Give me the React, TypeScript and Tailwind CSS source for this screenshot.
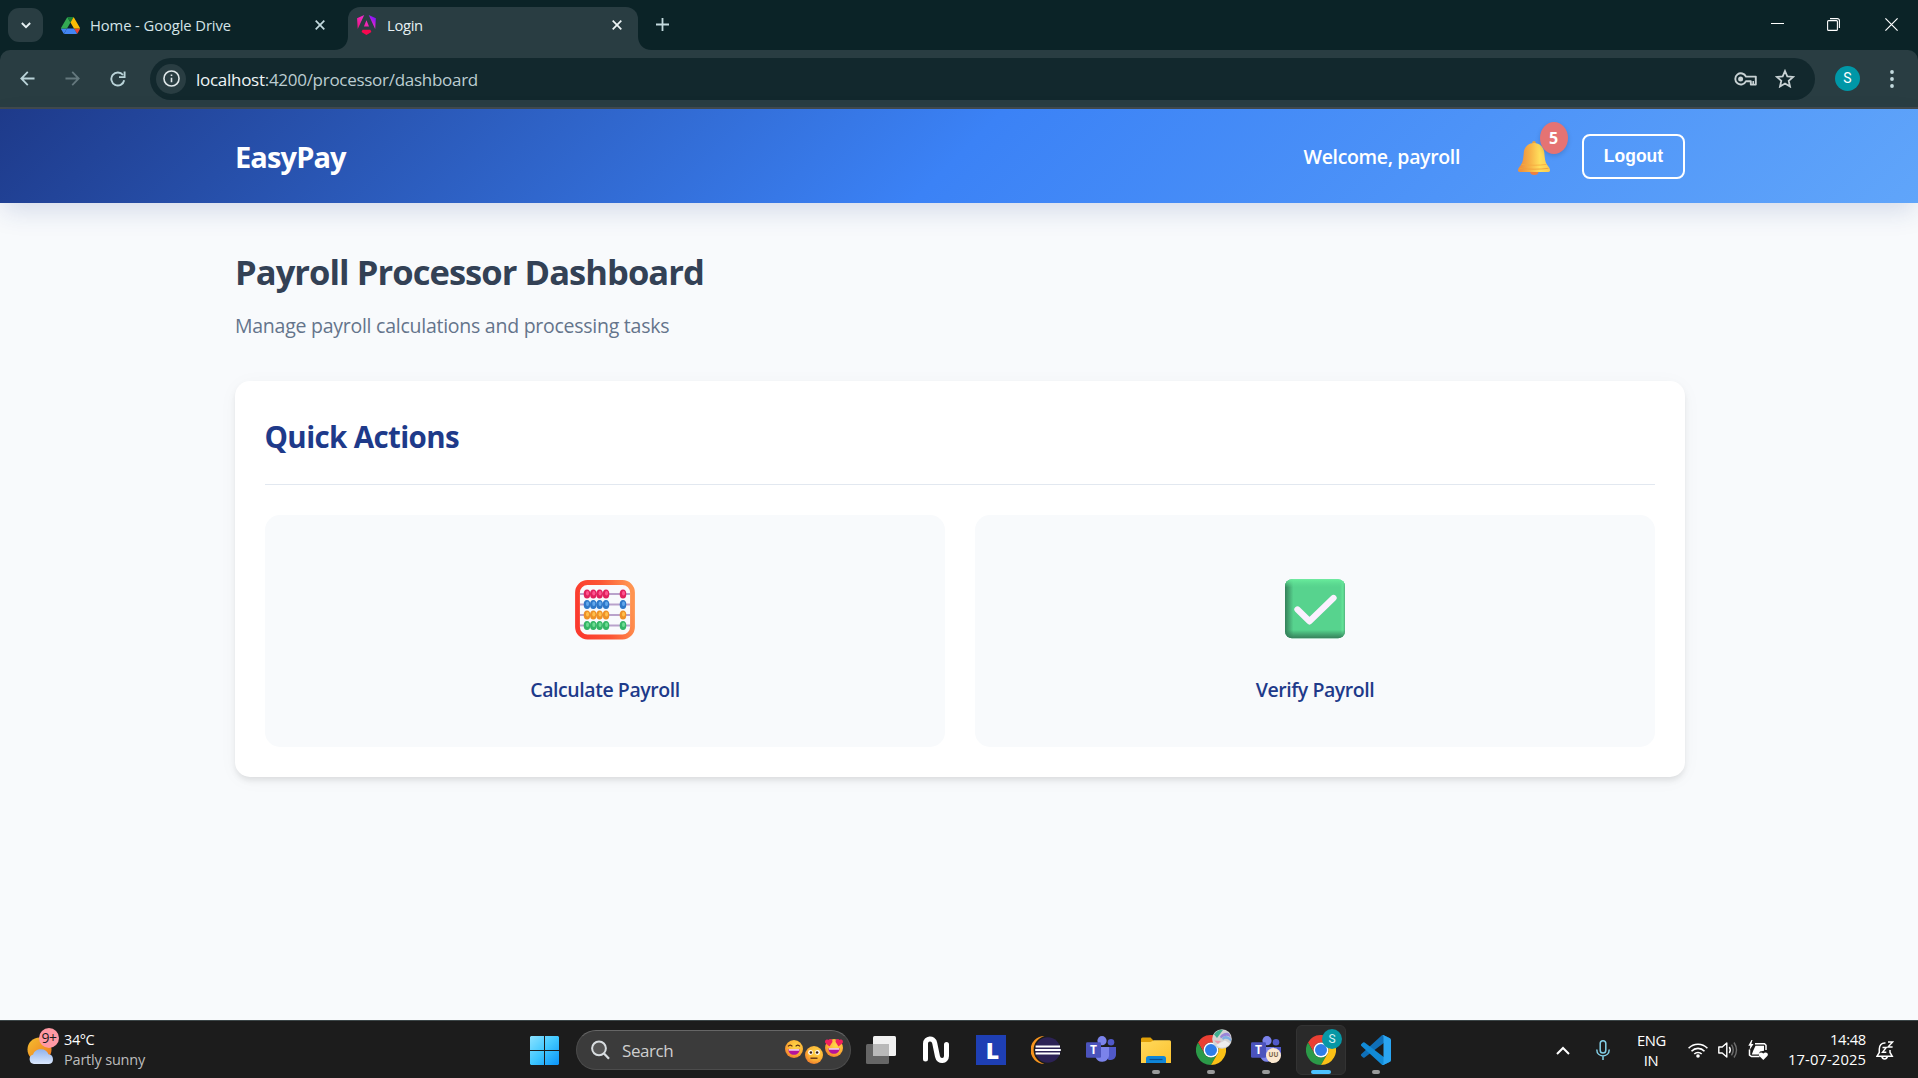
import type { ReactNode } from "react";

function DriveIcon() {
  return (
    <svg viewBox="0 0 87.3 78" preserveAspectRatio="none" className="h-[17px] w-[19px]">
      <path fill="#4285f4" d="m6.6 66.85 3.85 6.65c.8 1.4 1.95 2.5 3.3 3.3l13.75-23.8h-27.5c0 1.55.4 3.1 1.2 4.5z" />
      <path fill="#34a853" d="m43.65 25-13.75-23.8c-1.35.8-2.5 1.9-3.3 3.3l-25.4 44a9.06 9.06 0 0 0 -1.2 4.5h27.5z" />
      <path fill="#ea4335" d="m73.55 76.8c1.35-.8 2.5-1.9 3.3-3.3l1.6-2.75 7.65-13.25c.8-1.4 1.2-2.95 1.2-4.5h-27.502l5.852 11.5z" />
      <path fill="#188038" d="m43.65 25 13.75-23.8c-1.35-.8-2.9-1.2-4.5-1.2h-18.5c-1.6 0-3.15.45-4.5 1.2z" />
      <path fill="#4285f4" d="m59.8 53h-32.3l-13.75 23.8c1.35.8 2.9 1.2 4.5 1.2h50.8c1.6 0 3.15-.45 4.5-1.2z" />
      <path fill="#fbbc04" d="m73.4 26.5-12.7-22c-.8-1.4-1.95-2.5-3.3-3.3l-13.75 23.8 16.15 28h27.45c0-1.55-.4-3.1-1.2-4.5z" />
    </svg>
  );
}

function AngularIcon() {
  return (
    <svg viewBox="0 0 223 236" className="h-5 w-[19px]">
      <defs>
        <linearGradient id="ngA" x1="0.1" y1="0.8" x2="1" y2="0.1">
          <stop offset="0" stopColor="#f0188c" />
          <stop offset="0.5" stopColor="#f22bc6" />
          <stop offset="0.8" stopColor="#9a18f0" />
          <stop offset="1" stopColor="#6a1bff" />
        </linearGradient>
      </defs>
      <path fill="url(#ngA)" d="m222.077 39.192-8.019 125.923L137.387 0l84.69 39.192ZM111.039 62.675l30.357 73.803H80.681l30.358-73.803ZM7.937 165.115 0 39.192 84.69 0 7.937 165.115Z" />
      <path fill="#f8084f" d="m168.972 202.017-57.933 33.056-57.934-33.056 11.783-28.556h92.301z" />
    </svg>
  );
}

function CloseX({ color }: { color: string }) {
  return (
    <svg viewBox="0 0 10 10" className="h-[10px] w-[10px]" stroke={color} strokeWidth="1.7">
      <path d="M.7.7l8.6 8.6M9.3.7L.7 9.3" />
    </svg>
  );
}

function TabStrip() {
  return (
    <div className="flex h-[50px] items-start bg-[#0b2327] text-[#d5e5e8]">
      <div className="mt-2 ml-2 flex h-[34px] w-[35px] items-center justify-center rounded-[11px] bg-[#293d42]">
        <svg viewBox="0 0 12 8" className="h-[7px] w-[10px]" fill="none" stroke="#e6f0f2" strokeWidth="2.3">
          <path d="M1 1l5 5 5-5" />
        </svg>
      </div>
      <div className="mt-[7px] ml-[18px] flex h-9 w-[271px] items-center">
        <DriveIcon />
        <span className="ml-[10px] flex-1 text-[14.75px] tracking-[-0.08px] whitespace-nowrap">Home - Google Drive</span>
        <span className="mr-[7px]"><CloseX color="#c3dade" /></span>
      </div>
      <svg viewBox="0 0 14 14" className="mt-9 ml-[2px] h-[14px] w-[14px]" fill="#293d42">
        <path d="M14 0v14H0C9 14 14 8 14 0z" />
      </svg>
      <div className="mt-[7px] flex h-[43px] w-[290px] items-start rounded-t-[12px] bg-[#293d42] pt-2">
        <span className="ml-[9px]"><AngularIcon /></span>
        <span className="ml-[11px] flex-1 text-[14.75px] leading-5 tracking-[-0.3px] text-[#e6f0f2]">Login</span>
        <span className="mt-[5px] mr-[16px]"><CloseX color="#eef5f6" /></span>
      </div>
      <svg viewBox="0 0 14 14" className="mt-9 h-[14px] w-[14px]" fill="#293d42">
        <path d="M0 0v14h14C5 14 0 8 0 0z" />
      </svg>
      <svg viewBox="0 0 13 13" className="mt-[18px] ml-[4px] h-[13px] w-[13px]" stroke="#c3dade" strokeWidth="1.8">
        <path d="M6.5 0v13M0 6.5h13" />
      </svg>
      <div className="mt-[18px] mr-[20px] ml-auto flex h-[13px] items-center">
        <svg viewBox="0 0 13 13" className="h-[13px] w-[13px]" stroke="#fff" strokeWidth="1">
          <path d="M0 5.5h13" />
        </svg>
        <svg viewBox="0 0 13 13" className="ml-[43px] h-[13px] w-[13px]" fill="none" stroke="#fff" strokeWidth="1.1">
          <rect x=".6" y="2.6" width="9.8" height="9.8" rx="1" />
          <path d="M3 .6h7.4a2 2 0 0 1 2 2V10" />
        </svg>
        <svg viewBox="0 0 13 13" className="ml-[45px] h-[13px] w-[13px]" stroke="#fff" strokeWidth="1.2">
          <path d="M.4.4l12.2 12.2M12.6.4L.4 12.6" />
        </svg>
      </div>
    </div>
  );
}

function Toolbar() {
  return (
    <div className="bg-[#0b2327]">
      <div className="flex h-[59px] items-center rounded-t-[10px] border-b-2 border-[#42494c] bg-[#293d42]">
        <svg viewBox="0 0 16 16" className="ml-5 h-[15px] w-[15px]" fill="none" stroke="#b9d3d8" strokeWidth="1.9">
          <path d="M15.5 8H1.5M8.3 1L1.4 8l6.9 7" />
        </svg>
        <svg viewBox="0 0 16 16" className="ml-[30px] h-[15px] w-[15px]" fill="none" stroke="#64787d" strokeWidth="1.9">
          <path d="M.5 8h14M7.7 1l6.9 7-6.9 7" />
        </svg>
        <svg viewBox="0 0 16 16" className="ml-[30px] h-[16px] w-[16px]" fill="none" stroke="#b9d3d8" strokeWidth="1.9">
          <path d="M14.2 9.3A6.5 6.5 0 1 1 13 4" />
          <path d="M14.6.5v5.6H9" />
        </svg>
        <div className="ml-[24px] flex h-[42px] w-[1665px] items-center rounded-full bg-[#12282d]">
          <div className="ml-[6px] flex h-[30px] w-[30px] items-center justify-center rounded-full bg-[#293d42]">
            <svg viewBox="0 0 16 16" className="h-[17px] w-[17px]" fill="none" stroke="#dfe7e9" strokeWidth="1.5">
              <circle cx="8" cy="8" r="7.1" />
              <path d="M8 7.2v4.3M8 4.2v1.5" />
            </svg>
          </div>
          <span className="ml-[10px] translate-y-[0.5px] text-[17px] tracking-[-0.28px] whitespace-nowrap text-[#bccdd1]">
            <span className="text-[#eef5f6]">localhost</span>:4200/processor/dashboard
          </span>
          <svg viewBox="0 0 23 14" className="ml-auto h-[14px] w-[23px]" fill="none" stroke="#c8d2d4" strokeWidth="1.9">
            <path d="M12 4.6A5.6 5.6 0 1 0 12 9.2h4.8V12.6h5V4.6z" strokeLinejoin="round" />
            <circle cx="6.6" cy="6.9" r="2.5" fill="#c8d2d4" stroke="none" />
            <path d="M19.2 12V9" strokeWidth="1.6" />
          </svg>
          <svg viewBox="0 0 20 19" className="mr-[20px] ml-[18px] h-[19px] w-[20px]" fill="none" stroke="#c8d2d4" strokeWidth="1.8">
            <path d="M10 2l2.3 5.4 5.8.5-4.4 3.9 1.3 5.7-5-3-5 3 1.3-5.7L1.9 7.9l5.8-.5z" />
          </svg>
        </div>
        <div className="ml-5 flex h-[25px] w-[25px] items-center justify-center rounded-full bg-[#0097a7] font-[Roboto] text-[14px] text-white">S</div>
        <svg viewBox="0 0 4 18" className="ml-[30px] h-[18px] w-[4px]" fill="#c3dade">
          <circle cx="2" cy="2" r="1.9" />
          <circle cx="2" cy="9" r="1.9" />
          <circle cx="2" cy="16" r="1.9" />
        </svg>
      </div>
    </div>
  );
}

function BellIcon() {
  return (
    <svg viewBox="0 0 32 34" className="h-[34px] w-[32px]">
      <defs>
        <linearGradient id="bell" x1="0" x2="1">
          <stop offset="0.1" stopColor="#ee9340" />
          <stop offset="0.4" stopColor="#f8b548" />
          <stop offset="0.68" stopColor="#ffdf5c" />
          <stop offset="1" stopColor="#fbc94f" />
        </linearGradient>
      </defs>
      <ellipse cx="16.3" cy="31.3" rx="4" ry="2.7" fill="#f0803f" />
      <circle cx="16" cy="2" r="1.9" fill="#e8a23c" />
      <path fill="url(#bell)" d="M16 2c5.5 0 9.8 4 10.3 9.5.5 6 .9 9.5 2.9 12.5 1.7 2.3 2.8 3.500 2.800 5.300 0 1-.5 1.700-1.700 1.700H1.700C.5 31 0 30.300 0 29.300 0 27.500 1.300 26.300 2.900 24c2-3 2.400-6.500 2.900-12.500C6.300 6 10.500 2 16 2z" />
      <path d="M1.5 27.3c8 1.2 21 1.2 29 0" stroke="#ef9f3c" strokeWidth=".9" fill="none" />
      <path d="M3.5 23.4c7 1.1 18 1.1 25 0" stroke="#f5a93f" strokeWidth=".8" fill="none" />
    </svg>
  );
}

function AbacusIcon() {
  const rows = [
    { y: 14, a: "#e0215c", b: "#ff5590" },
    { y: 24.5, a: "#2e78c8", b: "#62a8ec" },
    { y: 35, a: "#ee9126", b: "#ffc04c" },
    { y: 45.5, a: "#34b566", b: "#6ddc92" },
  ];
  return (
    <svg viewBox="0 0 60 60" className="h-[60px] w-[60px] translate-y-px">
      <defs>
        <linearGradient id="abacus" x1="0" x2="1" y1="0.6" y2="0.4">
          <stop offset="0" stopColor="#fb3a2e" />
          <stop offset="0.5" stopColor="#fc5434" />
          <stop offset="1" stopColor="#ff9350" />
        </linearGradient>
      </defs>
      <rect x="2.5" y="2.5" width="55" height="54.5" rx="10" fill="none" stroke="url(#abacus)" strokeWidth="4.800" />
      {rows.map((r) => (
        <g key={r.y}>
          <path d={`M5 ${r.y}h50`} stroke="#b9a2cb" strokeWidth="2" />
          {[12, 18.3, 24.6, 31, 48].map((x) => (
            <g key={x}>
              <ellipse cx={x} cy={r.y} rx="3.3" ry="4.5" fill={r.a} />
              <ellipse cx={x + 0.5} cy={r.y - 0.8} rx="1.5" ry="2.3" fill={r.b} />
            </g>
          ))}
        </g>
      ))}
    </svg>
  );
}

function CheckIcon() {
  return (
    <svg viewBox="0 0 60 60" className="h-[60px] w-[60px]">
      <defs>
        <linearGradient id="ckX" x1="0" x2="1">
          <stop offset="0" stopColor="#35805a" />
          <stop offset="0.14" stopColor="#35805a" stopOpacity="0" />
          <stop offset="0.92" stopColor="#6df0a0" stopOpacity="0" />
          <stop offset="0.96" stopColor="#6df0a0" stopOpacity="0.5" />
          <stop offset="1" stopColor="#4fae7c" />
        </linearGradient>
        <linearGradient id="ckY" x1="0" x2="0" y1="0" y2="1">
          <stop offset="0" stopColor="#68ec9c" />
          <stop offset="0.14" stopColor="#5edc92" stopOpacity="0" />
          <stop offset="0.86" stopColor="#2f7a55" stopOpacity="0" />
          <stop offset="1" stopColor="#38805c" />
        </linearGradient>
      </defs>
      <rect y=".3" width="60" height="59" rx="7" fill="#57d38e" />
      <rect y=".3" width="60" height="59" rx="7" fill="url(#ckX)" />
      <rect y=".3" width="60" height="59" rx="7" fill="url(#ckY)" />
      <path d="M12.5 30.5l12 11.8L48.5 19" fill="none" stroke="#fbf0ff" strokeWidth="6.3" strokeLinecap="round" strokeLinejoin="round" />
    </svg>
  );
}

function Header() {
  return (
    <header className="relative z-10 h-[94px] bg-[linear-gradient(135deg,#1e3a8a_0%,#3b82f6_50%,#60a5fa_100%)] shadow-[0_10px_25px_-3px_rgba(30,58,138,0.17)]">
      <div className="ml-[235px] flex h-full w-[1450px] items-center text-white">
        <div className="text-[29px] leading-none font-bold tracking-[-0.88px]">EasyPay</div>
        <div className="ml-auto translate-y-px text-[19.5px] leading-none font-semibold tracking-[-0.35px] whitespace-nowrap">Welcome, payroll</div>
        <div className="relative ml-[58px] h-[34px] w-8 translate-y-[2px]">
          <BellIcon />
          <span className="absolute -top-[19px] left-[21.5px] flex h-8 w-7 items-center justify-center rounded-[50%] bg-[#e57373] text-[16px] leading-none font-bold shadow-[0_2px_5px_rgba(0,0,0,0.15)]">5</span>
        </div>
        <div className="ml-[32px] flex h-[45px] w-[103px] items-center justify-center rounded-[8px] border-2 border-white font-['Liberation_Sans'] text-[17.5px] leading-5 font-bold">
          Logout
        </div>
      </div>
    </header>
  );
}

function ActionTile({ icon, label }: { icon: ReactNode; label: string }) {
  return (
    <div className="flex h-[232px] flex-1 flex-col items-center rounded-[15px] bg-[#f8fafc] pt-[64px]">
      {icon}
      <div className="mt-[41px] text-[19.5px] leading-5 font-semibold tracking-[-0.44px] whitespace-nowrap text-[#1e3a8a]">{label}</div>
    </div>
  );
}

function Dashboard() {
  return (
    <main className="ml-[235px] h-[817px] w-[1450px] pt-[49px]">
      <h1 className="text-[34.5px] leading-10 font-bold tracking-[-0.93px] text-[#334155]">Payroll Processor Dashboard</h1>
      <p className="mt-[19px] text-[19.5px] leading-[30px] tracking-[-0.255px] text-[#64748b]">Manage payroll calculations and processing tasks</p>
      <section className="mt-[40px] h-[396px] rounded-[15px] bg-white px-[30px] shadow-[0_4px_6px_-1px_rgba(0,0,0,0.1),0_3px_20px_rgba(0,0,0,0.035)]">
        <div className="h-[104px] border-b border-[#e2e8f0] pt-[36px]">
          <h2 className="-ml-[0.5px] text-[29.5px] leading-10 font-bold tracking-[-0.62px] text-[#1e3a8a]">Quick Actions</h2>
        </div>
        <div className="mt-[30px] flex gap-[30px]">
          <ActionTile icon={<AbacusIcon />} label="Calculate Payroll" />
          <ActionTile icon={<CheckIcon />} label="Verify Payroll" />
        </div>
      </section>
    </main>
  );
}

function WeatherIcon() {
  return (
    <div className="relative ml-[27px] h-[27px] w-[28px]">
      <svg viewBox="0 0 28 27" className="h-[27px] w-[28px]">
        <defs>
          <linearGradient id="sun" x1="0" x2="1" y1="0" y2="1">
            <stop offset="0" stopColor="#f3bf30" />
            <stop offset="1" stopColor="#f0741e" />
          </linearGradient>
          <linearGradient id="cloud" x1="0" x2="0" y1="0" y2="1">
            <stop offset="0" stopColor="#8fb2ee" />
            <stop offset="1" stopColor="#dbe8fd" />
          </linearGradient>
        </defs>
        <circle cx="12.5" cy="12.5" r="12" fill="url(#sun)" />
        <path fill="url(#cloud)" d="M7 27a4.9 4.9 0 0 1-.8-9.6C7 14.2 10 12.2 14 12.2c3.8 0 6.500 2 7.400 5.100A4.900 4.900 0 0 1 22 27z" />
      </svg>
      <span className="absolute -top-[9px] left-[12px] flex h-5 w-5 items-center justify-center rounded-full bg-[#ff99a4] text-[14px] tracking-[-0.5px] text-[#1c1c1c]">9+</span>
    </div>
  );
}

function Face({ kind }: { kind: "grin" | "flat" | "love" }) {
  return (
    <svg viewBox="0 0 18 18" className="h-[18px] w-[18px] overflow-visible">
      <defs>
        <radialGradient id={"face-" + kind} cx="0.6" cy="0.35" r="0.7">
          <stop offset="0" stopColor="#ffd84a" />
          <stop offset="0.6" stopColor="#fdb335" />
          <stop offset="1" stopColor="#ee7a2c" />
        </radialGradient>
      </defs>
      <circle cx="9" cy="9" r="9" fill={`url(#face-${kind})`} />
      {kind === "flat" ? (
        <>
          <circle cx="5.5" cy="6.5" r="2.4" fill="#fff" />
          <circle cx="12.5" cy="6.5" r="2.4" fill="#fff" />
          <circle cx="5.9" cy="6.5" r="1.3" fill="#3d1f14" />
          <circle cx="12.1" cy="6.5" r="1.3" fill="#3d1f14" />
          <path d="M5.5 12.2h7" stroke="#5c2c14" strokeWidth="1.3" />
        </>
      ) : (
        <>
          <path d="M3.3 9.3h11.4c0 3.5-2.5 5.5-5.7 5.5s-5.7-2-5.7-5.5z" fill="#b5139d" />
          <path d="M3.8 9.3h10.4v1.3H3.8z" fill="#fff" />
        </>
      )}
      {kind === "grin" && <path d="M3 6.4q2.2-2.6 4.4 0M10.6 6.4q2.2-2.6 4.4 0" stroke="#5c2c14" strokeWidth="1.2" fill="none" />}
      {kind === "love" && (
        <path fill="#f1205e" d="M4.5 7.500L.6 4.300C-1 2.500 1-.6 3.300 1 4.800-1 8 .3 7.400 3zM13.500 7.500l3.900-3.200C19 2.500 17-.6 14.700 1 13.200-1 10 .3 10.600 3z" />
      )}
    </svg>
  );
}

function SearchBox() {
  return (
    <div className="ml-1 flex h-10 w-[275px] items-center rounded-full border border-[#4c4c4c] border-t-[#666] bg-[#3b3b3b]">
      <svg viewBox="0 0 19 20" className="ml-[14px] h-[20px] w-[19px]" fill="none" stroke="#d8dde0" strokeWidth="2">
        <circle cx="8" cy="8.3" r="6.9" fill="#555" />
        <path d="M13 13.5l5 5.2" strokeWidth="2.3" />
      </svg>
      <span className="ml-[12px] translate-y-[0.5px] text-[17px] tracking-[-0.42px] text-[#cfcfcf]">Search</span>
      <div className="mr-[7px] ml-auto flex gap-[2px]">
        <span className="-translate-y-px"><Face kind="grin" /></span>
        <span className="translate-y-[5px]"><Face kind="flat" /></span>
        <span className="-translate-y-[2px]"><Face kind="love" /></span>
      </div>
    </div>
  );
}

function ChromeIcon() {
  return (
    <svg viewBox="0 0 48 48" className="h-[30px] w-[30px]">
      <path fill="#ea3f33" d="M24 12h20.8A24 24 0 0 0 3.2 12l10.4 18A12 12 0 0 1 24 12z" />
      <path fill="#2b9a48" d="M3.2 12A24 24 0 0 0 24 48l10.4-18a12 12 0 0 1-20.8 0z" />
      <path fill="#fbc116" d="M24 48a24 24 0 0 0 20.8-36H24a12 12 0 0 1 10.4 18z" />
      <circle cx="24" cy="24" r="12" fill="#fff" />
      <circle cx="24" cy="24" r="9.6" fill="#2f7de9" />
    </svg>
  );
}

function TeamsIcon() {
  return (
    <div className="relative h-[28px] w-[30px]">
      <svg viewBox="0 0 30 28" className="h-[28px] w-[30px]">
        <circle cx="25" cy="6.3" r="3.3" fill="#5059c9" />
        <path d="M19 11h11v7.5a5.5 5.5 0 0 1-8 4.9z" fill="#5059c9" />
        <circle cx="16" cy="4.7" r="4.6" fill="#7b83eb" />
        <path d="M9.5 11H23v9a7 7 0 0 1-13.5 1z" fill="#7b83eb" />
        <rect y="6.3" width="15" height="15.5" rx="1.3" fill="#4b53bc" />
      </svg>
      <span className="absolute top-[6px] left-0 flex h-[16px] w-[15px] items-center justify-center text-[12px] leading-none font-bold text-white">T</span>
    </div>
  );
}

function Slot({ children, mark, active }: { children: ReactNode; mark?: boolean; active?: boolean }) {
  return (
    <div className="relative flex h-full w-[55px] items-center justify-center">
      <div className={active ? "relative flex h-[50px] w-[50px] items-center justify-center rounded-[6px] border border-[#333] bg-[#2a2a2a]" : "relative flex h-[50px] w-[50px] items-center justify-center"}>
        {children}
      </div>
      {mark && <span className={active ? "absolute bottom-[4px] h-[4px] w-[20px] rounded-full bg-[#4cc2ff]" : "absolute bottom-[4px] h-[4px] w-[8px] rounded-full bg-[#9a9a9a]"} />}
    </div>
  );
}

function Apps() {
  return (
    <div className="ml-[2.5px] flex h-full">
      <Slot>
        <svg viewBox="0 0 30 28" className="h-[28px] w-[30px]">
          <rect y="8" width="23" height="20" rx="1.5" fill="#666" />
          <rect x="7" width="23" height="20" rx="1.5" fill="#f1f1f1" />
          <path d="M7 8h16v12H7z" fill="#b9b9b9" />
        </svg>
      </Slot>
      <Slot>
        <svg viewBox="0 0 28 28" className="h-[28px] w-[28px]" fill="none" stroke="#fff" strokeWidth="5" strokeLinecap="round">
          <path d="M3.5 23V7.500c0-5.500 8-6.500 9.200-.5l2.800 13.500c1.200 6 9 5 9-.5V8.500" />
        </svg>
      </Slot>
      <Slot>
        <div className="flex h-[30px] w-[30px] items-center justify-center bg-[#1e3fb4] pl-[3px] text-[23px] leading-none font-extrabold text-white">L</div>
      </Slot>
      <Slot>
        <svg viewBox="0 0 30 28" className="h-[28px] w-[30px]">
          <path d="M13.500 0A14 14 0 0 0 13.500 28C6.500 25.500 2.600 20.500 2.600 14S6.500 2.500 13.500 0z" fill="#f7941e" />
          <circle cx="16.8" cy="14" r="12.7" fill="#2c2255" />
          <path d="M4.600 10.5h24.400M4.200 14h25.600M4.600 17.5h24.400" stroke="#fff" strokeWidth="2" />
        </svg>
      </Slot>
      <Slot><TeamsIcon /></Slot>
      <Slot mark>
        <svg viewBox="0 0 30 27" className="h-[27px] w-[30px]">
          <defs>
            <linearGradient id="folder" x1="0" x2="1" y1="0" y2="1">
              <stop offset="0" stopColor="#ffd95c" />
              <stop offset="1" stopColor="#fcc22f" />
            </linearGradient>
          </defs>
          <path d="M0 2a1.5 1.5 0 0 1 1.5-1.5h8L13 4v4H0z" fill="#e0a008" />
          <path d="M0 5h9.5L13 3.300h15.500A1.500 1.500 0 0 1 30 4.800V26H0z" fill="url(#folder)" />
          <path d="M5 26v-4.500a2.500 2.500 0 0 1 2.500-2.500h15a2.500 2.500 0 0 1 2.500 2.500V26z" fill="#0f86d8" />
          <path d="M8.5 22.5h13" stroke="#0a4f90" strokeWidth="1.2" />
        </svg>
      </Slot>
      <Slot mark>
        <ChromeIcon />
        <svg viewBox="0 0 20 20" className="absolute top-[4px] left-[26px] h-5 w-5">
          <circle cx="10" cy="10" r="9.8" fill="#d3d3d3" />
          <path d="M2 5.500C5 1 9 .5 11 1L5 9z" fill="#3fae8f" />
          <path d="M8 7.500c3-4.500 8-4.500 9.500-2.500l1.500 4c-3-3-6-3-10 .5z" fill="#9a86d8" />
          <path d="M10 9c3-3 6-2.500 9.300 1l-.5 2.500C15 9 13 9.500 11 11z" fill="#7fb0e4" />
          <path d="M2 11.500l7 .5-3 3z" fill="#e79aa8" />
          <path d="M4 16l9-4.500 5 3c-3 4-9 6-14 1.500z" fill="#ececec" />
        </svg>
      </Slot>
      <Slot mark>
        <TeamsIcon />
        <span className="absolute top-[23px] left-[25px] flex h-[15px] w-[15px] items-center justify-center rounded-full bg-[#fbe8cf] text-[6.5px] leading-none font-bold text-[#7a6348]">UU</span>
      </Slot>
      <Slot mark active>
        <ChromeIcon />
        <span className="absolute top-[3px] left-[25px] flex h-5 w-5 items-center justify-center rounded-full bg-[#0797a5] font-[Roboto] text-[12px] leading-none text-[#d9f1f3]">S</span>
      </Slot>
      <Slot mark>
        <svg viewBox="0 0 100 100" className="h-[30px] w-[30px]">
          <path fill="#0f6fb8" d="M96.46 10.8L75.86.88c-2.38-1.15-5.23-.67-7.1 1.2L1.3 63.58c-1.82 1.65-1.81 4.5 0 6.16l5.5 5a4.17 4.17 0 0 0 5.33.24l81.23-61.62c2.72-2.07 6.64-.12 6.64 3.3v-.24c0-2.4-1.38-4.6-3.54-5.63z" />
          <path fill="#118ad6" d="M96.46 89.2l-20.6 9.92c-2.38 1.15-5.23.67-7.1-1.2L1.3 36.42c-1.82-1.65-1.81-4.5 0-6.16l5.5-5a4.17 4.17 0 0 1 5.33-.24l81.23 61.62c2.72 2.07 6.64.12 6.64-3.3v.24c0 2.4-1.38 4.6-3.54 5.63z" />
          <path fill="#2aa5f2" d="M75.86 99.13c-2.38 1.15-5.23.67-7.1-1.2 2.3 2.3 6.24.67 6.24-2.58V4.65c0-3.25-3.94-4.88-6.24-2.58 1.87-1.87 4.72-2.35 7.1-1.2l20.6 9.9A6.25 6.25 0 0 1 100 16.4v67.2c0 2.4-1.38 4.6-3.54 5.63z" />
        </svg>
      </Slot>
    </div>
  );
}

function Tray() {
  return (
    <div className="mr-6 ml-auto flex h-full items-center text-[14.75px] leading-5 text-white">
      <svg viewBox="0 0 14 9" className="h-[9px] w-[14px]" fill="none" stroke="#fff" strokeWidth="2">
        <path d="M1 8l6-6 6 6" />
      </svg>
      <svg viewBox="0 0 14 20" className="ml-[26px] h-5 w-[14px]" fill="none" stroke="#83d0e8" strokeWidth="1.5">
        <rect x="4.2" y=".8" width="5.6" height="12.2" rx="2.8" />
        <path d="M.8 9.5c0 8.500 12.400 8.500 12.400 0M7 16v4" />
      </svg>
      <div className="ml-[27px] w-[28px] text-center tracking-[-0.4px]">
        <div>ENG</div>
        <div>IN</div>
      </div>
      <svg viewBox="0 0 20 16" className="ml-[23px] h-[16px] w-5" fill="none" stroke="#fff" strokeWidth="1.6">
        <path d="M.6 6.300a13 13 0 0 1 18.800 0M3.500 9.200a9 9 0 0 1 13 0M6.300 12a5.200 5.200 0 0 1 7.400 0" />
        <circle cx="10" cy="14" r="1.8" fill="#fff" stroke="none" />
      </svg>
      <svg viewBox="0 0 20 18" className="ml-[10px] h-[18px] w-5" fill="none" stroke="#fff" strokeWidth="1.4">
        <path d="M.8 6v6h3.400l4.600 4V2L4.200 6z" strokeLinejoin="round" />
        <path d="M11.3 6q2 3 0 6" />
        <path d="M13.5 3.700q3.500 5.300 0 10.600M16 1.500q5 7.500 0 15" stroke="#6d6d6d" />
      </svg>
      <svg viewBox="0 0 20 20" className="ml-[10px] h-5 w-5">
        <path d="M7 3.800h9.500L18 5.300V10M11.500 16.500H3.500L1.500 15V9.500" stroke="#fff" strokeWidth="1.500" fill="none" />
        <path d="M7.500 5.800h8.500v5l-4 .7-1.500 3H3.800l1.500-4z" fill="#fff" />
        <path d="M3.500 0L.3 5.800h2L1.500 10 5.500 4H3.300L4.500 0z" fill="#fff" />
        <path d="M15.300 20l-4-4c-2-2.500 1.600-5 4-2.500 2.400-2.500 6 0 4 2.500z" fill="#fff" />
      </svg>
      <div className="ml-[20px] w-[78px] -translate-y-px text-right whitespace-nowrap">
        <div className="tracking-[-0.3px]">14:48</div>
        <div className="tracking-[0.1px]">17-07-2025</div>
      </div>
      <svg viewBox="0 0 18 19" className="ml-[10px] h-[19px] w-[18px]" fill="none" stroke="#fff" strokeWidth="1.5">
        <path d="M9.500 2C5.500 1.500 3.300 4.500 3.300 8v3.500L1 15.200h15.200L14 11.500V9M5.800 15.500c.8 3.200 4.800 3.200 5.600 0" />
        <path d="M6.500 6.500h3.800l-3.800 4.800h3.800M12 1h4.600L12 6h4.600" strokeWidth="1.400" />
      </svg>
    </div>
  );
}

function Taskbar() {
  return (
    <div className="flex h-[58px] items-center border-t border-[#3b4547] bg-[#1c1c1c] pt-px">
      <div className="flex w-[517px] items-center text-[14.5px] leading-5">
        <WeatherIcon />
        <div className="ml-[9px]">
          <div className="tracking-[-0.4px] text-white">34°C</div>
          <div className="tracking-[-0.2px] text-[#bdbdbd]">Partly sunny</div>
        </div>
      </div>
      <Slot>
        <svg viewBox="0 0 29 29" className="h-[29px] w-[29px]">
          <defs>
            <linearGradient id="win" x1="0" x2="1" y1="0" y2="1">
              <stop offset="0" stopColor="#8be2ff" />
              <stop offset="0.5" stopColor="#3fc7ff" />
              <stop offset="1" stopColor="#0a93f8" />
            </linearGradient>
          </defs>
          <path fill="url(#win)" d="M1 0h13v14H0V1zM15 0h13l1 1v13H15zM0 15h14v14H1l-1-1zM15 15h14v13l-1 1H15z" />
        </svg>
      </Slot>
      <SearchBox />
      <Apps />
      <Tray />
    </div>
  );
}

export default function App() {
  return (
    <div className="h-[1078px] w-[1918px] overflow-hidden bg-[#f8fafc] font-['Open_Sans',sans-serif]">
      <TabStrip />
      <Toolbar />
      <Header />
      <Dashboard />
      <Taskbar />
    </div>
  );
}
